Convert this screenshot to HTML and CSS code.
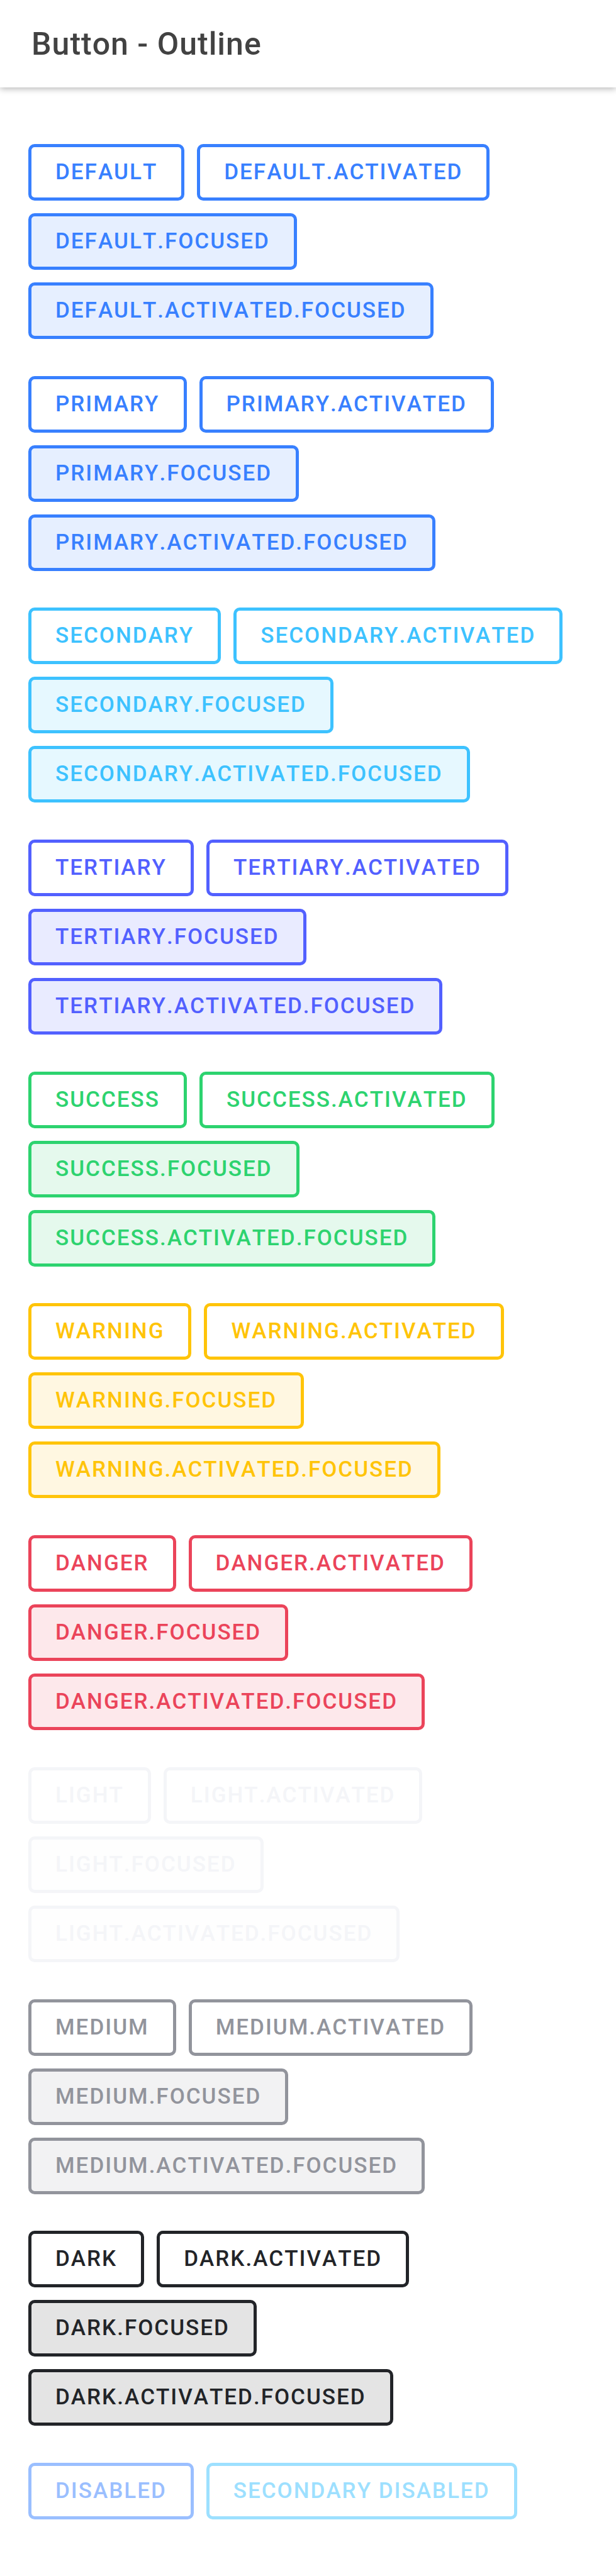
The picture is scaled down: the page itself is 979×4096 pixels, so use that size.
FILE: index.html
```html
<!DOCTYPE html>
<html lang="en">
<head>
<meta charset="utf-8">
<meta name="viewport" content="width=device-width, initial-scale=1">
<title>Button - Outline</title>
<link rel="stylesheet" href="styles.css">
</head>
<body>
<header class="toolbar"><h1 class="toolbar-title">Button - Outline</h1></header>
<main class="content">
<div class="group primary">
<button type="button" class="button">Default</button>
<button type="button" class="button">Default.activated</button>
<button type="button" class="button focused">Default.focused</button>
<button type="button" class="button focused">Default.activated.focused</button>
</div>
<div class="group primary">
<button type="button" class="button">Primary</button>
<button type="button" class="button">Primary.activated</button>
<button type="button" class="button focused">Primary.focused</button>
<button type="button" class="button focused">Primary.activated.focused</button>
</div>
<div class="group secondary">
<button type="button" class="button">Secondary</button>
<button type="button" class="button">Secondary.activated</button>
<button type="button" class="button focused">Secondary.focused</button>
<button type="button" class="button focused">Secondary.activated.focused</button>
</div>
<div class="group tertiary">
<button type="button" class="button">Tertiary</button>
<button type="button" class="button">Tertiary.activated</button>
<button type="button" class="button focused">Tertiary.focused</button>
<button type="button" class="button focused">Tertiary.activated.focused</button>
</div>
<div class="group success">
<button type="button" class="button">Success</button>
<button type="button" class="button">Success.activated</button>
<button type="button" class="button focused">Success.focused</button>
<button type="button" class="button focused">Success.activated.focused</button>
</div>
<div class="group warning">
<button type="button" class="button">Warning</button>
<button type="button" class="button">Warning.activated</button>
<button type="button" class="button focused">Warning.focused</button>
<button type="button" class="button focused">Warning.activated.focused</button>
</div>
<div class="group danger">
<button type="button" class="button">Danger</button>
<button type="button" class="button">Danger.activated</button>
<button type="button" class="button focused">Danger.focused</button>
<button type="button" class="button focused">Danger.activated.focused</button>
</div>
<div class="group light">
<button type="button" class="button">Light</button>
<button type="button" class="button">Light.activated</button>
<button type="button" class="button focused">Light.focused</button>
<button type="button" class="button focused">Light.activated.focused</button>
</div>
<div class="group medium">
<button type="button" class="button">Medium</button>
<button type="button" class="button">Medium.activated</button>
<button type="button" class="button focused">Medium.focused</button>
<button type="button" class="button focused">Medium.activated.focused</button>
</div>
<div class="group dark">
<button type="button" class="button">Dark</button>
<button type="button" class="button">Dark.activated</button>
<button type="button" class="button focused">Dark.focused</button>
<button type="button" class="button focused">Dark.activated.focused</button>
</div>
<div class="group">
<button type="button" class="button primary" disabled>Disabled</button>
<button type="button" class="button secondary" disabled>Secondary Disabled</button>
</div>
</main>
</body>
</html>
```
FILE: styles.css
```css
* {
  box-sizing: border-box;
}

body {
  display: flex;
  flex-direction: column;
  min-height: 100vh;
  margin: 0;
  background: #fff;
  font-family: Roboto, "Liberation Sans", sans-serif;
  font-kerning: none;
}

.toolbar {
  display: flex;
  align-items: center;
  min-height: 139px;
  padding: 0 50px;
  box-shadow: 0 2px 10px rgba(0, 0, 0, 0.3);
}

.toolbar-title {
  margin: 0;
  color: #424242;
  font-size: 50px;
  font-weight: 500;
  letter-spacing: 1px;
  line-height: 60px;
}

.content {
  display: flex;
  flex: 1;
  flex-direction: column;
  justify-content: space-between;
  gap: 38px;
  padding: 90px 45px;
}

.group {
  display: flex;
  flex-wrap: wrap;
  gap: 20px;
}

.button {
  min-height: 90px;
  padding: 0 38px;
  border: 5px solid var(--color);
  border-radius: 10px;
  background: transparent;
  color: var(--color);
  font-family: inherit;
  font-size: 35px;
  font-weight: 500;
  font-kerning: none;
  letter-spacing: 2px;
  line-height: 40px;
  text-transform: uppercase;
}

.button.focused {
  background: var(--tint);
}

.button:disabled {
  opacity: 0.5;
}

.primary { --color: #3880ff; --tint: #e6efff; }
.secondary { --color: #3dc2ff; --tint: #e6f8ff; }
.tertiary { --color: #5260ff; --tint: #e9ebff; }
.success { --color: #2dd36f; --tint: #e5f9ed; }
.warning { --color: #ffc409; --tint: #fff7e1; }
.danger { --color: #eb445a; --tint: #fde8eb; }
.light { --color: #f4f5f8; --tint: #fefefe; }
.medium { --color: #92949c; --tint: #f2f2f3; }
.dark { --color: #222428; --tint: #e4e4e4; }
```
